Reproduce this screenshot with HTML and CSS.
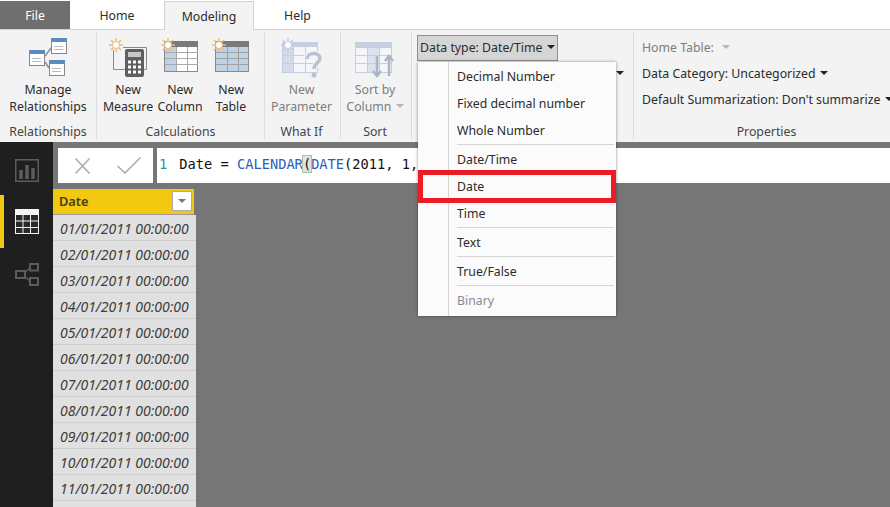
FILE: index.html
```html
<!DOCTYPE html>
<html lang="en">
<head>
    <meta charset="UTF-8">
    <meta name="viewport" content="width=device-width, initial-scale=1.0">
    <title>Modeling</title>
    <link rel="stylesheet" href="styles.css">
</head>
<body>
    <header class="tabs">
        <div class="tab tab-file">File</div>
        <div class="tab tab-home">Home</div>
        <div class="tab tab-active">Modeling</div>
        <div class="tab tab-help">Help</div>
    </header>

    <section class="ribbon">
        <div class="group group-rel">
            <div class="group-body">
                <div class="tool tool-wide">
                    <svg class="icon" width="38" height="40" viewBox="0 0 38 40">
                        <path d="M16 18L22 10M16 24L20 30" stroke="#8f8f8f" stroke-width="1.500" fill="none"/>
                        <rect x="0.500" y="12.500" width="15" height="15" fill="#fff" stroke="#888"/>
                        <rect x="0" y="12" width="16" height="4" fill="#5b8cc0"/>
                        <rect x="22.500" y="0.500" width="15" height="15" fill="#fff" stroke="#888"/>
                        <rect x="22" y="0" width="16" height="4" fill="#5b8cc0"/>
                        <rect x="20.500" y="22.500" width="15" height="15" fill="#fff" stroke="#888"/>
                        <rect x="20" y="22" width="16" height="4" fill="#5b8cc0"/>
                        <path d="M3 20.500h9M3 23.500h9M25 8.500h9M25 11.500h9M23 30.500h9M23 33.500h9" stroke="#bbb"/>
                    </svg>
                    <span>Manage</span><span>Relationships</span>
                </div>
            </div>
            <div class="group-name">Relationships</div>
        </div>

        <div class="group group-calc">
            <div class="group-body body-start">
                <div class="tool">
                    <svg class="icon" width="38" height="40" viewBox="0 0 38 40">
                        <path d="M4.500 12V31.500H16M14 9.500H37.500V31.500H35" stroke="#8a8a8a" fill="none"/>
                        <rect x="16" y="11" width="19" height="28" rx="2" fill="#5f5f5f"/>
                        <rect x="19" y="14" width="13" height="5" fill="#c8c8c8"/>
                        <path d="M19 24h3M24 24h3M29 24h3M19 29h3M24 29h3M29 29h3M19 34h3M24 34h3M29 34h3" stroke="#fff" stroke-width="3"/>
                        <path d="M7 0v14M0 7h14M2 2l10 10M12 2L2 12" stroke="#e8bd7c" stroke-width="1.500"/>
                        <circle cx="7" cy="7" r="3.500" fill="#fff" stroke="#e8bd7c"/>
                    </svg>
                    <span>New</span><span>Measure</span>
                </div>
                <div class="tool">
                    <svg class="icon" width="38" height="40" viewBox="0 0 38 40">
                        <rect x="3.500" y="3.500" width="33" height="30" fill="#fff" stroke="#8a8a8a"/>
                        <rect x="3" y="3" width="34" height="6" fill="#7a7a7a"/>
                        <rect x="4" y="9" width="11" height="24" fill="#bed3e6"/>
                        <path d="M15.500 9v24M26.500 9v24M4 14.500h33M4 20.500h33M4 26.500h33" stroke="#a8a8a8"/>
                        <path d="M7 0v14M0 7h14M2 2l10 10M12 2L2 12" stroke="#e8bd7c" stroke-width="1.500"/>
                        <circle cx="7" cy="7" r="3.500" fill="#fff" stroke="#e8bd7c"/>
                    </svg>
                    <span>New</span><span>Column</span>
                </div>
                <div class="tool">
                    <svg class="icon" width="38" height="40" viewBox="0 0 38 40">
                        <rect x="3.500" y="3.500" width="33" height="30" fill="#bed3e6" stroke="#8a8a8a"/>
                        <rect x="3" y="3" width="34" height="6" fill="#7a7a7a"/>
                        <path d="M15.500 9v24M26.500 9v24M4 14.500h33M4 20.500h33M4 26.500h33" stroke="#a0a0a0"/>
                        <path d="M7 0v14M0 7h14M2 2l10 10M12 2L2 12" stroke="#e8bd7c" stroke-width="1.500"/>
                        <circle cx="7" cy="7" r="3.500" fill="#fff" stroke="#e8bd7c"/>
                    </svg>
                    <span>New</span><span>Table</span>
                </div>
            </div>
            <div class="group-name">Calculations</div>
        </div>

        <div class="group group-whatif">
            <div class="group-body">
                <div class="tool tool-off">
                    <svg class="icon" width="42" height="40" viewBox="0 0 42 40">
                        <rect x="1.500" y="4.500" width="35" height="30" fill="#f4f6f9" stroke="#c6cfdf"/>
                        <rect x="1" y="4" width="36" height="5" fill="#c6cfdf"/>
                        <rect x="2" y="9" width="10" height="25" fill="#d3dbe8"/>
                        <path d="M12.500 9v25M24.500 9v25M2 17.500h34M2 25.500h34" stroke="#c6cfdf"/>
                        <path d="M7 0v14M0 7h14M2 2l10 10M12 2L2 12" stroke="#c6cfdf" stroke-width="1.500"/>
                        <circle cx="7" cy="7" r="3.500" fill="#fff" stroke="#c6cfdf"/>
                        <path d="M26 21c0-7 13-7 13-1 0 5-6 5-6 11" stroke="#f3f3f3" stroke-width="6" fill="none"/>
                        <path d="M26 21c0-7 13-7 13-1 0 5-6 5-6 11" stroke="#b8c2d4" stroke-width="3.500" fill="none"/>
                        <circle cx="33" cy="37" r="2.500" fill="#b8c2d4"/>
                    </svg>
                    <span>New</span><span>Parameter</span>
                </div>
            </div>
            <div class="group-name">What If</div>
        </div>

        <div class="group group-sort">
            <div class="group-body">
                <div class="tool tool-off">
                    <svg class="icon" width="40" height="40" viewBox="0 0 40 40">
                        <rect x="0.500" y="4.500" width="36" height="30" fill="#f4f6f9" stroke="#c6cfdf"/>
                        <rect x="0" y="4" width="37" height="6" fill="#c6cfdf"/>
                        <rect x="12" y="10" width="13" height="24" fill="#dde3ed"/>
                        <path d="M12.500 10v24M24.500 10v24M0 17.500h37M0 25.500h37" stroke="#c6cfdf"/>
                        <path d="M22 18v20M18 33l4 5 4-5M34 38V18M30 23l4-5 4 5" stroke="#aab5c8" stroke-width="2.500" fill="none"/>
                    </svg>
                    <span>Sort by</span><span>Column <i class="caret caret-off"></i></span>
                </div>
            </div>
            <div class="group-name">Sort</div>
        </div>

        <div class="group group-format">
            <div class="data-type">Data type: Date/Time <i class="caret"></i></div>
            <i class="caret caret-behind"></i>
        </div>

        <div class="group group-props">
            <div class="group-body props">
                <div class="prop prop-off">Home Table: <i class="caret caret-off caret-home"></i></div>
                <div class="prop">Data Category: Uncategorized <i class="caret"></i></div>
                <div class="prop">Default Summarization: Don't summarize <i class="caret"></i></div>
            </div>
            <div class="group-name">Properties</div>
        </div>
    </section>

    <main class="workspace">
        <nav class="sidenav">
            <div class="nav-item nav-first">
                <svg width="24" height="23" viewBox="0 0 24 23">
                    <rect x="0.750" y="0.750" width="22.500" height="21.500" fill="none" stroke="#5c5c5c" stroke-width="1.500"/>
                    <path d="M6 20v-9M12 20V6M18 20V9" stroke="#5c5c5c" stroke-width="3.500"/>
                </svg>
            </div>
            <div class="nav-item nav-active">
                <svg width="24" height="25" viewBox="0 0 24 25">
                    <rect width="24" height="25" fill="#f4f4f4"/>
                    <path d="M1 6h6.500v5.500H1zM8.500 6H15v5.500H8.500zM16 6h7v5.500h-7zM1 12.500h6.500V18H1zM8.500 12.500H15V18H8.500zM16 12.500h7V18h-7zM1 19h6.500v5H1zM8.500 19H15v5H8.500zM16 19h7v5h-7z" fill="#2a2a2a"/>
                </svg>
            </div>
            <div class="nav-item">
                <svg width="24" height="23" viewBox="0 0 24 23">
                    <path d="M9 10l6-5M9 13l6 5" stroke="#5c5c5c" stroke-width="1.500" fill="none"/>
                    <path d="M1 8h9v7H1zM15 1h8v6.500h-8zM15 15h8v7h-8z" fill="none" stroke="#5c5c5c" stroke-width="2"/>
                </svg>
            </div>
        </nav>

        <div class="content">
            <div class="formula-bar">
                <div class="formula-actions">
                    <svg width="15" height="16" viewBox="0 0 15 16">
                        <path d="M0.500 0.500l14 15M14.500 0.500l-14 15" stroke="#a9a9a9" stroke-width="1.500"/>
                    </svg>
                    <svg width="24" height="17" viewBox="0 0 24 17">
                        <path d="M0.500 9l7.500 7L23.500 0.500" stroke="#a9a9a9" stroke-width="1.500" fill="none"/>
                    </svg>
                </div>
                <div class="formula-input">
                    <span class="line-no">1</span>
                    <span>Date = <span class="fn">CALENDAR</span><span class="paren">(</span><span class="fn">DATE</span>(2011, 1,</span>
                </div>
            </div>

            <div class="table">
                <div class="table-head">
                    <span>Date</span>
                    <span class="filter"><i class="caret caret-filter"></i></span>
                </div>
                <div class="table-row">01/01/2011 00:00:00</div>
                <div class="table-row">02/01/2011 00:00:00</div>
                <div class="table-row">03/01/2011 00:00:00</div>
                <div class="table-row">04/01/2011 00:00:00</div>
                <div class="table-row">05/01/2011 00:00:00</div>
                <div class="table-row">06/01/2011 00:00:00</div>
                <div class="table-row">07/01/2011 00:00:00</div>
                <div class="table-row">08/01/2011 00:00:00</div>
                <div class="table-row">09/01/2011 00:00:00</div>
                <div class="table-row">10/01/2011 00:00:00</div>
                <div class="table-row">11/01/2011 00:00:00</div>
                <div class="table-row"></div>
            </div>
        </div>
    </main>

    <ul class="menu">
        <li class="menu-item">Decimal Number</li>
        <li class="menu-item">Fixed decimal number</li>
        <li class="menu-item">Whole Number</li>
        <li class="menu-sep"></li>
        <li class="menu-item">Date/Time</li>
        <li class="menu-item menu-picked">Date</li>
        <li class="menu-item">Time</li>
        <li class="menu-sep"></li>
        <li class="menu-item">Text</li>
        <li class="menu-sep"></li>
        <li class="menu-item">True/False</li>
        <li class="menu-sep"></li>
        <li class="menu-item menu-off">Binary</li>
    </ul>
</body>
</html>
```

FILE: styles.css
```css
body {
    margin: 0;
    width: 890px;
    height: 507px;
    overflow: hidden;
    display: flex;
    flex-direction: column;
    font-family: "Noto Sans", "Open Sans", Arial, sans-serif;
    font-size: 12.3px;
    color: #2b2b2b;
    background-color: #fff;
}

.tabs {
    display: flex;
    height: 29px;
    flex-shrink: 0;
    padding-top: 1px;
    box-sizing: border-box;
}

.tab {
    display: flex;
    align-items: center;
    justify-content: center;
    height: 28px;
    box-sizing: border-box;
}

.tab-file {
    width: 70px;
    background-color: #6f6f6f;
    color: #fff;
}

.tab-home {
    width: 94px;
}

.tab-active {
    width: 90px;
    height: 29px;
    background-color: #f3f3f3;
    border: 1px solid #d2d2d2;
    border-bottom: none;
    position: relative;
    z-index: 1;
}

.tab-help {
    width: 87px;
}

.ribbon {
    display: flex;
    height: 113px;
    flex-shrink: 0;
    box-sizing: border-box;
    background-color: #f3f3f3;
    border-top: 1px solid #d2d2d2;
    padding: 2px 0 3px;
}

.group {
    display: flex;
    flex-direction: column;
    flex-shrink: 0;
    border-right: 1px solid #dcdcdc;
    box-sizing: border-box;
}

.group-rel { width: 97px; }
.group-calc { width: 168px; }
.group-whatif { width: 76px; padding-right: 2px; }
.group-sort { width: 71px; padding-right: 2px; }
.group-format { width: 222px; position: relative; }
.group-props { width: 256px; border-right: none; }

.group-body {
    flex: 1;
    display: flex;
    justify-content: center;
}

.body-start {
    justify-content: flex-start;
    padding-left: 5px;
}

.group-name {
    height: 19px;
    line-height: 24px;
    text-align: center;
    color: #444;
}

.group-props .group-name {
    padding-left: 9px;
}

.tool {
    width: 52px;
    display: flex;
    flex-direction: column;
    align-items: center;
    line-height: 17px;
    white-space: nowrap;
}

.tool:last-child {
    width: 50px;
}

.tool-wide {
    width: 96px;
}

.tool-off {
    color: #7d7d7d;
}

.icon {
    margin: 6px 0 3px;
    flex-shrink: 0;
}

.caret {
    display: inline-block;
    width: 0;
    height: 0;
    border-left: 4px solid transparent;
    border-right: 4px solid transparent;
    border-top: 4px solid #222;
    vertical-align: 3px;
    margin-left: 1px;
}

.caret-off {
    border-top-color: #b5b5b5;
}

.caret-home {
    margin-left: 5px;
}

.caret-behind {
    position: absolute;
    left: 204px;
    top: 39px;
    margin: 0;
}

.caret-filter {
    border-top-color: #777;
    margin: 0;
    vertical-align: middle;
}

.data-type {
    align-self: flex-start;
    margin: 3px 0 0 5px;
    width: 141px;
    height: 26px;
    line-height: 24px;
    padding: 0 2px;
    box-sizing: border-box;
    background-color: #d5d5d5;
    border: 1px solid #8f8f8f;
    white-space: nowrap;
}

.props {
    flex-direction: column;
    justify-content: flex-start;
    padding: 3px 0 0 8px;
}

.prop {
    height: 26px;
    line-height: 26px;
    white-space: nowrap;
}

.prop-off {
    color: #7d7d7d;
}

.workspace {
    flex: 1;
    display: flex;
    background-color: #767676;
    min-height: 0;
}

.sidenav {
    width: 53px;
    background-color: #1f1f1f;
    flex-shrink: 0;
}

.nav-item {
    height: 53px;
    display: flex;
    align-items: center;
    justify-content: center;
    box-sizing: border-box;
}

.nav-first {
    padding-top: 4px;
}

.nav-active {
    border-left: 4px solid #f2c811;
    padding-right: 4px;
}

.content {
    flex: 1;
    overflow: hidden;
}

.formula-bar {
    display: flex;
    height: 35px;
    margin: 6px 0 6px;
    padding-left: 5px;
    gap: 4px;
}

.formula-actions {
    width: 95px;
    display: flex;
    align-items: center;
    gap: 27px;
    padding-left: 17px;
    background-color: #fff;
    box-sizing: border-box;
}

.formula-input {
    flex: 1;
    display: flex;
    align-items: center;
    gap: 12px;
    background-color: #fff;
    padding: 0 0 4px 2px;
    font-family: "DejaVu Sans Mono", "Liberation Mono", monospace;
    font-size: 13.7px;
    color: #111;
    white-space: pre;
}

.line-no {
    color: #2b91af;
}

.fn {
    color: #2b5fb8;
}

.paren {
    background-color: #dbe7d8;
    outline: 1px solid #a9c0a5;
}

.table {
    width: 143px;
}

.table-head {
    width: 141px;
    height: 26px;
    display: flex;
    align-items: center;
    justify-content: space-between;
    padding: 0 2px 1px 6px;
    box-sizing: border-box;
    background-color: #f2c811;
    font-size: 12.8px;
    font-weight: 600;
    color: #4a3b10;
    border-bottom: 1px solid #9a9a9a;
}

.filter {
    width: 20px;
    height: 20px;
    display: flex;
    align-items: center;
    justify-content: center;
    box-sizing: border-box;
    background-color: #fff;
    border: 1px solid #aaa;
}

.table-row {
    height: 26px;
    line-height: 27px;
    box-sizing: border-box;
    padding-left: 7px;
    background-color: #e0e0e0;
    border-bottom: 1px solid #cfcfcf;
    font-size: 14px;
    font-style: italic;
    color: #3c3c3c;
    white-space: nowrap;
}

.menu {
    position: absolute;
    left: 418px;
    top: 62px;
    width: 198px;
    height: 254px;
    box-sizing: border-box;
    margin: 0;
    padding: 1px 0 0;
    list-style-type: none;
    background-color: #fbfbfb;
    box-shadow: 0 0 3px rgba(0, 0, 0, 0.45);
    background-image: linear-gradient(#d5d5d5, #d5d5d5);
    background-size: 1px 100%;
    background-position: 30px 0;
    background-repeat: no-repeat;
}

.menu-item {
    height: 27px;
    line-height: 27px;
    padding-left: 39px;
    box-sizing: border-box;
}

.menu-sep {
    height: 2px;
    margin: 0 2px 0 39px;
    border-top: 1px solid #d5d5d5;
    box-sizing: border-box;
}

.menu-picked {
    position: relative;
}

.menu-picked::after {
    content: "";
    position: absolute;
    left: 0;
    right: 0;
    top: -3px;
    bottom: -3px;
    border: 5px solid #ed1c24;
}

.menu-off {
    color: #8a8a8a;
}
```
